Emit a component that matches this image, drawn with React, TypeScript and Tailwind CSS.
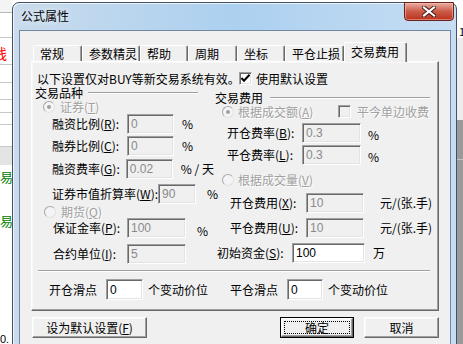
import clsx from 'clsx'

const sunken =
	'border border-t-[#a0a0a0] border-l-[#a0a0a0] border-r-white border-b-white shadow-[inset_1px_1px_0_#696969,inset_-1px_-1px_0_#e3e3e3]'
const raised =
	'border border-t-white border-l-white border-r-[#696969] border-b-[#696969] shadow-[inset_-1px_-1px_0_#a0a0a0,inset_1px_1px_0_#f8f8f8]'
const grayText = 'text-[#a0a0a0] [text-shadow:1px_1px_0_#fff]'

function Key({ t, k }: { t: string; k: string }) {
	return (
		<>
			{t}(<u>{k}</u>):
		</>
	)
}

function Field({ className, value, on }: { className: string; value: string; on?: boolean }) {
	return (
		<div
			className={clsx(
				className,
				sunken,
				"flex h-[20px] shrink-0 items-center pl-[3px] font-['Liberation_Sans',sans-serif] text-[12px]",
				on ? 'bg-white text-black' : 'bg-[#f0f0f0] text-[#8a8a8a]',
			)}
		>
			{value}
		</div>
	)
}

function Radio({ checked }: { checked?: boolean }) {
	return (
		<span className="flex h-[12px] w-[12px] shrink-0 items-center justify-center rounded-full border border-[#a8a8a8] border-r-[#e2e2e2] border-b-[#e2e2e2] bg-[#f4f4f4]">
			{checked && <span className="h-[4px] w-[4px] rounded-full bg-[#a0a0a0]" />}
		</span>
	)
}

function Check({ checked, disabled }: { checked?: boolean; disabled?: boolean }) {
	return (
		<span
			className={clsx(
				sunken,
				'flex h-[13px] w-[13px] shrink-0 items-center justify-center',
				disabled ? 'bg-[#f0f0f0]' : 'bg-white',
			)}
		>
			{checked && (
				<svg width="11" height="11" viewBox="0 0 11 11">
					<polyline points="1.5,5 4,7.8 9.5,1.8" fill="none" stroke="#000" strokeWidth="2" />
				</svg>
			)}
		</span>
	)
}

function Header({ text, lineClass }: { text: string; lineClass: string }) {
	return (
		<div className="flex h-[12px] items-center">
			<span className="whitespace-nowrap">{text}</span>
			<span className={clsx(lineClass, 'h-[2px] border-t border-b border-t-[#a0a0a0] border-b-white')} />
		</div>
	)
}

function BackApp() {
	return (
		<div className="flex h-full">
			<div className="flex w-[12px] flex-col overflow-hidden bg-white">
				<div className="h-[13px] shrink-0 border-b border-[#b9b9b9] bg-[#f4f4f4]" />
				<div className="h-[25px] shrink-0 border-b border-[#c8c8c8]" />
				<div className="flex h-[27px] shrink-0 items-center border-b border-[#c8c8c8] pt-[4px]">
					<span className="-ml-[7px] text-[14px] leading-[14px] text-[#ff0000]">线</span>
				</div>
				<div className="h-[18px] shrink-0 border-b border-[#c8c8c8]" />
				<div className="h-[17px] shrink-0 border-b border-[#c8c8c8]" />
				<div className="h-[13px] shrink-0 border-b border-[#c8c8c8]" />
				<div className="h-[12px] shrink-0 border-b border-[#c8c8c8]" />
				<div className="h-[22px] shrink-0 border-b border-[#c8c8c8]" />
				<div className="h-[18px] shrink-0 bg-[#e4e4e4]" />
				<div className="flex h-[22px] shrink-0 items-center whitespace-nowrap text-[13px] leading-[13px] text-[#008000]">易统</div>
				<div className="h-[22px] shrink-0" />
				<div className="flex h-[22px] shrink-0 items-center whitespace-nowrap text-[13px] leading-[13px] text-[#008000]">易</div>
				<div className="flex-1" />
				<div className="h-[9px] shrink-0 font-['Liberation_Sans',sans-serif] text-[11px] leading-[9px]">0.</div>
			</div>
			<div className="flex-1" />
			<div className="flex w-[7px] flex-col">
				<div className="h-[24px] bg-white" />
				<div className="flex h-[14px] items-center overflow-hidden bg-white pl-[3px] text-[11px]">1</div>
				<div className="h-[82px] bg-[#ececec]" />
				<div className="h-[40px] border-b border-[#c4c4c4] bg-[#9a9a9a]" />
				<div className="flex-1 bg-[#9a9a9a]" />
			</div>
		</div>
	)
}

const tabs = [
	['常规', 'w-[49px]'],
	['参数精灵', 'w-[58px]'],
	['帮助', 'w-[48px]'],
	['周期', 'w-[49px]'],
	['坐标', 'w-[48px]'],
	['平仓止损', 'w-[59px]'],
]

function Dialog() {
	return (
		<div className="absolute top-[2px] left-[12px] flex h-[360px] w-[445px] flex-col rounded-t-[7px] border border-[#46525f] bg-linear-to-r from-[#c9dbec] via-[#acd0f0] to-[#c6ddf3] shadow-[inset_1px_1px_0_rgba(255,255,255,0.7)]">
			<div className="flex h-[27px] shrink-0 items-start">
				<span className="mt-[7px] ml-[8px] [text-shadow:0_0_6px_#fff]">公式属性</span>
				<div className="-mt-px mr-[2px] ml-auto flex h-[19px] w-[50px] items-center justify-center rounded-b-[4px] border border-[#6b2219] bg-linear-to-b from-[#e6aca2] via-[#cc5a47] to-[#b8301c] shadow-[inset_0_0_0_1px_rgba(255,200,190,0.5)]">
					<svg width="14" height="11" viewBox="0 0 14 11">
						<path d="M2 1.5 L12 9.5 M12 1.5 L2 9.5" stroke="#3c1a16" strokeWidth="4" strokeLinecap="square" />
						<path d="M2 1.5 L12 9.5 M12 1.5 L2 9.5" stroke="#fff" strokeWidth="2.2" strokeLinecap="square" />
					</svg>
				</div>
			</div>
			<div className="mr-[5px] ml-[6px] flex flex-1 flex-col border border-[#7388a0] bg-[#f0f0f0]">
				<div className="mt-[11px] ml-[11px] flex h-[19px] items-end">
					<div className="w-[2px]" />
					{tabs.map(([t, w]) => (
						<div
							key={t}
							className={clsx(
								w,
								'h-[16px] shrink-0 rounded-t-[2px] border-t border-r border-l border-t-white border-r-[#696969] border-l-white pt-[2px] pl-[6px] whitespace-nowrap shadow-[inset_-1px_0_0_#a0a0a0]',
							)}
						>
							{t}
						</div>
					))}
					<div className="relative z-10 -mb-px h-[20px] w-[63px] shrink-0 rounded-t-[2px] border-t border-r border-l border-t-white border-r-[#696969] border-l-white bg-[#f0f0f0] pt-[3px] pl-[6px] whitespace-nowrap shadow-[inset_-1px_0_0_#a0a0a0]">
						交易费用
					</div>
				</div>
				<div className={clsx(raised, 'ml-[11px] flex h-[250px] w-[408px] shrink-0 flex-col')}>
					<div className="mt-[10px] flex h-[13px] items-center pl-[5px]">
						<span className="w-[202px] whitespace-nowrap">以下设置仅对BUY等新交易系统有效。</span>
						<Check checked />
						<span className="ml-[4px] whitespace-nowrap">使用默认设置</span>
					</div>
					<div className="mt-[2px] flex items-start">
						<div className="flex w-[182px] shrink-0 flex-col pl-[3px]">
							<Header text="交易品种" lineClass="ml-[5px] w-[110px]" />
							<div className="mt-px flex h-[13px] items-center pl-[8px]">
								<Radio checked />
								<span className={clsx(grayText, 'ml-[5px] whitespace-nowrap')}>
									证券(<u>T</u>)
								</span>
							</div>
							<div className="mt-px flex h-[20px] items-center pl-[17px]">
								<span className="w-[75px] whitespace-nowrap"><Key t="融资比例" k="R" /></span>
								<Field className="w-[47px]" value="0" />
								<span className="ml-[8px]">%</span>
							</div>
							<div className="mt-[2px] flex h-[20px] items-center pl-[17px]">
								<span className="w-[75px] whitespace-nowrap"><Key t="融券比例" k="C" /></span>
								<Field className="w-[47px]" value="0" />
								<span className="ml-[8px]">%</span>
							</div>
							<div className="mt-[3px] flex h-[20px] items-center pl-[17px]">
								<span className="w-[75px] whitespace-nowrap"><Key t="融资费率" k="G" /></span>
								<Field className="w-[47px]" value="0.02" />
								<span className="ml-[8px] whitespace-nowrap">% / 天</span>
							</div>
							<div className="mt-[5px] flex h-[20px] items-center pl-[17px]">
								<span className="w-[111px] whitespace-nowrap"><Key t="证券市值折算率" k="W" /></span>
								<Field className="w-[38px]" value="90" />
								<span className="ml-[11px]">%</span>
							</div>
							<div className="mt-px flex h-[13px] items-center pl-[9px]">
								<Radio />
								<span className={clsx(grayText, 'ml-[5px] whitespace-nowrap')}>
									期货(<u>Q</u>)
								</span>
							</div>
							<div className="flex h-[20px] items-center pl-[18px]">
								<span className="w-[74px] whitespace-nowrap"><Key t="保证金率" k="P" /></span>
								<Field className="w-[59px]" value="100" />
								<span className="mt-[6px] ml-[11px]">%</span>
							</div>
							<div className="mt-[6px] flex h-[20px] items-center pl-[18px]">
								<span className="w-[74px] whitespace-nowrap"><Key t="合约单位" k="I" /></span>
								<Field className="w-[59px]" value="5" />
							</div>
						</div>
						<div className="mt-[5px] flex flex-1 flex-col">
							<div className="pl-px">
								<Header text="交易费用" lineClass="ml-[7px] w-[160px]" />
							</div>
							<div className="mt-px flex h-[13px] items-center pl-[8px]">
								<Radio checked />
								<span className={clsx(grayText, 'ml-[4px] w-[100px] whitespace-nowrap')}>
									根据成交额(<u>A</u>)
								</span>
								<Check disabled />
								<span className={clsx(grayText, 'ml-[6px] whitespace-nowrap')}>平今单边收费</span>
							</div>
							<div className="mt-[5px] flex h-[20px] items-center pl-[13px]">
								<span className="w-[75px] whitespace-nowrap"><Key t="开仓费率" k="B" /></span>
								<Field className="w-[59px]" value="0.3" />
								<span className="mt-[3px] ml-[7px]">%</span>
							</div>
							<div className="mt-[2px] flex h-[20px] items-center pl-[13px]">
								<span className="w-[75px] whitespace-nowrap"><Key t="平仓费率" k="L" /></span>
								<Field className="w-[59px]" value="0.3" />
								<span className="mt-[3px] ml-[7px]">%</span>
							</div>
							<div className="mt-[8px] flex h-[13px] items-center pl-[8px]">
								<Radio />
								<span className={clsx(grayText, 'ml-[4px] whitespace-nowrap')}>
									根据成交量(<u>V</u>)
								</span>
							</div>
							<div className="mt-[7px] flex h-[20px] items-center pl-[16px]">
								<span className="w-[76px] whitespace-nowrap"><Key t="开仓费用" k="X" /></span>
								<Field className="w-[58px]" value="10" />
								<span className="ml-[16px] whitespace-nowrap">元/(张.手)</span>
							</div>
							<div className="mt-[5px] flex h-[20px] items-center pl-[16px]">
								<span className="w-[76px] whitespace-nowrap"><Key t="平仓费用" k="U" /></span>
								<Field className="w-[58px]" value="10" />
								<span className="ml-[16px] whitespace-nowrap">元/(张.手)</span>
							</div>
							<div className="mt-[5px] flex h-[20px] items-center pl-[3px]">
								<span className="w-[75px] whitespace-nowrap"><Key t="初始资金" k="S" /></span>
								<Field className="w-[73px]" value="100" on />
								<span className="ml-[8px]">万</span>
							</div>
						</div>
					</div>
					<div className="mt-[6px] ml-[6px] h-[2px] w-[392px] border-t border-b border-t-[#a0a0a0] border-b-white" />
					<div className="mt-[7px] flex h-[21px] items-center pl-[17px]">
						<span className="w-[57px] whitespace-nowrap">开仓滑点</span>
						<Field className="h-[21px] w-[37px]" value="0" on />
						<span className="ml-[5px] w-[82px] whitespace-nowrap">个变动价位</span>
						<span className="w-[57px] whitespace-nowrap">平仓滑点</span>
						<Field className="h-[21px] w-[36px]" value="0" on />
						<span className="ml-[5px] whitespace-nowrap">个变动价位</span>
					</div>
				</div>
				<div className="mt-[6px] ml-[12px] flex h-[21px] items-stretch">
					<div className={clsx(raised, 'flex w-[115px] items-center justify-center bg-[#f0f0f0] whitespace-nowrap')}>
						设为默认设置(<u>F</u>)
					</div>
					<div className="ml-[133px] flex w-[74px] border border-black">
						<div className={clsx(raised, 'flex flex-1 p-[2px]')}>
							<div className="flex flex-1 items-center justify-center border border-dotted border-black">确定</div>
						</div>
					</div>
					<div className={clsx(raised, 'ml-[10px] flex w-[75px] items-center justify-center bg-[#f0f0f0]')}>取消</div>
				</div>
			</div>
		</div>
	)
}

export default function App() {
	return (
		<div className="relative h-[344px] w-[463px] overflow-hidden bg-white font-['Noto_Sans_CJK_SC',sans-serif] text-[12px] leading-[12px] text-black">
			<BackApp />
			<Dialog />
		</div>
	)
}
